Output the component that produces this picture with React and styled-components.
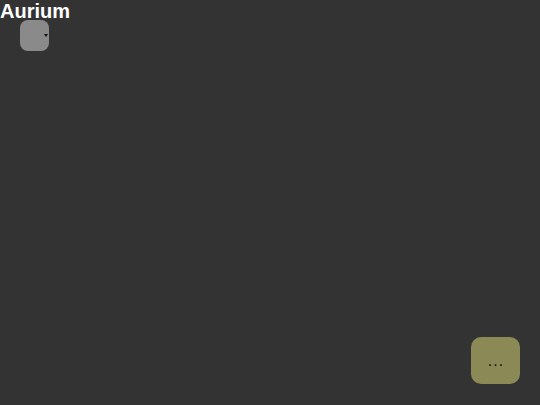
import React from "react";
import styled, { createGlobalStyle } from "styled-components";

const Global = createGlobalStyle`
  html, body { margin: 0; padding: 0; background: #333333; }
  body { font-family: "Liberation Sans", Arial, sans-serif; width: 540px; height: 405px; overflow: hidden; }
`;

const Page = styled.div`
  position: relative;
  width: 540px;
  height: 405px;
  display: flex;
  flex-direction: column;
`;

const Title = styled.h1`
  margin: 0;
  font-size: 20px;
  line-height: 23px;
  font-weight: 700;
  color: #ffffff;
`;

const SelectWrap = styled.div`
  position: relative;
  margin: -3px 0 0 20px;
  width: 29px;
  height: 31px;
`;

const Select = styled.select`
  appearance: none;
  -webkit-appearance: none;
  display: block;
  width: 29px;
  height: 31px;
  border: none;
  border-radius: 8px;
  background: #8a8a8a;
  padding: 0;
  outline: none;
`;

const Chevron = styled.svg`
  position: absolute;
  left: 24px;
  top: 14px;
  width: 4px;
  height: 3px;
  pointer-events: none;
`;

const Footer = styled.div`
  margin-top: auto;
  display: flex;
  justify-content: flex-end;
  padding: 0 20px 21px 0;
`;

const MoreButton = styled.button`
  width: 49px;
  height: 47px;
  border: none;
  border-radius: 10px;
  background: #8b8a56;
  color: #15150a;
  font-family: "Liberation Sans", Arial, sans-serif;
  font-size: 16px;
  font-weight: 400;
  letter-spacing: 1px;
  padding: 0 0 0 1px;
  display: flex;
  align-items: center;
  justify-content: center;
`;

export default function App() {
  return (
    <>
      <Global />
      <Page>
        <Title>Aurium</Title>
        <SelectWrap>
          <Select aria-label="select" />
          <Chevron viewBox="0 0 4 3">
            <path d="M0 0 L2 3 L4 0 Z" fill="#111" />
          </Chevron>
        </SelectWrap>
        <Footer>
          <MoreButton>...</MoreButton>
        </Footer>
      </Page>
    </>
  );
}
